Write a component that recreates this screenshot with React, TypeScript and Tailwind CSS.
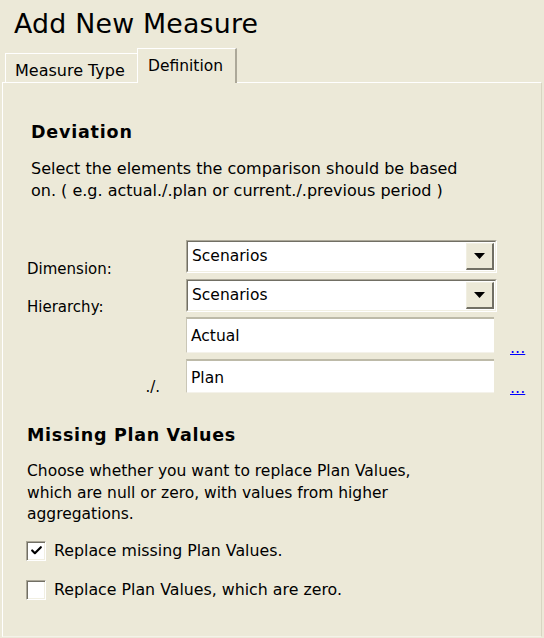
import { Check } from 'lucide-react';

const sunken =
	'border-t border-l border-t-[#aca899] border-l-[#aca899] border-b border-r border-b-white border-r-white';

const SelectBox = ({ value }: { value: string }) => {
	return (
		<div className={`w-[311px] h-[33px] ${sunken}`}>
			<div className="h-full flex items-center bg-white border-t border-l border-t-[#716f64] border-l-[#716f64] border-b border-r border-b-[#f1efe2] border-r-[#f1efe2]">
				<span className="flex-1 pl-[4px] text-[15.5px]">{value}</span>
				<div className="w-[28px] h-[27px] mr-[1px] flex items-center justify-center bg-[#ece9d8] border-t border-l border-t-[#f1efe2] border-l-[#f1efe2] border-b-2 border-r-2 border-b-[#716f64] border-r-[#716f64]">
					<svg width="11" height="6" viewBox="0 0 11 6">
						<path d="M0 0 H11 L5.5 6 Z" fill="#000" />
					</svg>
				</div>
			</div>
		</div>
	);
};

const TextBox = ({ value, tall }: { value: string; tall?: boolean }) => {
	return (
		<div
			className={`w-[308px] ${tall ? 'h-[36px]' : 'h-[34px]'} bg-white border-t-2 border-t-[#bdbaa8] border-l border-l-[#c9c6b6] border-b border-b-[#f4f2ea] pl-[4px] pt-[6px] text-[15.5px]`}
		>
			{value}
		</div>
	);
};

const CheckBox = ({ checked, label }: { checked?: boolean; label: string }) => {
	return (
		<div className="flex items-center h-[20px]">
			<div className="w-[20px] h-[20px] bg-white border-t border-l border-t-[#aca899] border-l-[#aca899] border-b border-r border-b-white border-r-white shadow-[inset_1px_1px_0_#716f64,inset_-1px_-1px_0_#f1efe2] flex items-center justify-center">
				{checked ? <Check size={13} strokeWidth={4} color="#000" /> : <></>}
			</div>
			<span className="ml-[8px]">{label}</span>
		</div>
	);
};

export default function App() {
	return (
		<div className="w-[544px] h-[638px] bg-[#ece9d8] text-black font-['DejaVu_Sans',sans-serif] text-[16px] overflow-hidden">
			<h1 className="h-[48px] pl-[14px] pt-[8px] text-[26.8px] leading-[32px] tracking-[0.2px]">
				Add New Measure
			</h1>

			{/* tabs */}
			<div className="flex items-end pl-[5px] h-[35px] -mb-px relative z-10">
				<div className="w-[132px] h-[30px] border-t border-l border-white flex items-center pl-[9px] pt-[4px] text-[16px]">
					Measure Type
				</div>
				<div className="w-[100px] h-[35px] bg-[#ece9d8] border-t border-l border-white border-r-2 border-r-[#aca899] flex items-start pt-[6px] pl-[10px] text-[15.5px]">
					Definition
				</div>
			</div>

			<div className="ml-[2px] w-[540px] h-[555px] border-t border-l border-white border-r border-b border-r-[#d8d4c2] border-b-[#f4f2ea] pl-[24px]">
				<div className="pl-[4px] pt-[38px]">
					<h2 className="font-bold text-[17.5px] leading-[22px] tracking-[0.8px]">
						Deviation
					</h2>
					<p className="mt-[15px] leading-[22px] text-[16px]">
						Select the elements the comparison should be based
						<br />
						on. ( e.g. actual./.plan or current./.previous period )
					</p>
				</div>

				<div className="mt-[38px] flex flex-col">
					<div className="flex items-start h-[33px]">
						<div className="w-[159px] pt-[18px] text-[15px]">Dimension:</div>
						<SelectBox value="Scenarios" />
					</div>
					<div className="flex items-start h-[33px] mt-[6px]">
						<div className="w-[159px] pt-[17px] text-[15px]">Hierarchy:</div>
						<SelectBox value="Scenarios" />
					</div>
					<div className="flex items-end mt-[5px]">
						<div className="w-[159px]" />
						<TextBox value="Actual" tall />
						<a className="ml-[16px] mb-[-2px] text-[#0000ff] underline leading-[14px]">
							...
						</a>
					</div>
					<div className="flex items-end mt-[6px]">
						<div className="w-[159px] flex justify-end pr-[26px] -mb-[5px] text-[15px]">
							./.
						</div>
						<TextBox value="Plan" />
						<a className="ml-[16px] mb-[-2px] text-[#0000ff] underline leading-[14px]">
							...
						</a>
					</div>
				</div>

				<h2 className="mt-[31px] font-bold text-[17.5px] leading-[22px] tracking-[0.7px]">
					Missing Plan Values
				</h2>
				<p className="mt-[15px] leading-[21.5px] text-[15.5px]">
					Choose whether you want to replace Plan Values,
					<br />
					which are null or zero, with values from higher
					<br />
					aggregations.
				</p>
				<div className="mt-[15px] flex flex-col gap-[19px] -ml-[1px] text-[15.8px]">
					<CheckBox checked label="Replace missing Plan Values." />
					<CheckBox label="Replace Plan Values, which are zero." />
				</div>
			</div>
		</div>
	);
}
